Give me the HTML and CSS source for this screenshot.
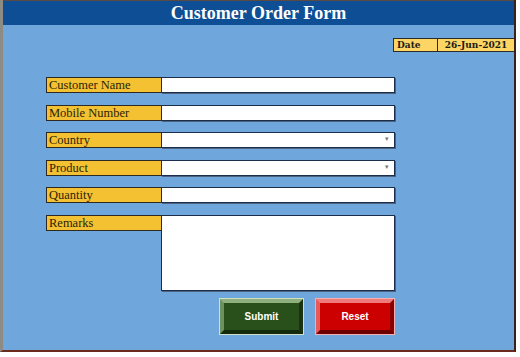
FILE: index.html
```html
<!DOCTYPE html>
<html lang="en">
<head>
  <meta charset="UTF-8">
  <title>Customer Order Form</title>
  <link rel="stylesheet" href="styles.css">
</head>
<body>
  <div class="sheet">
    <div class="title-bar">Customer Order Form</div>

    <div class="date-row">
      <div class="date-box">
        <span class="date-label">Date</span>
        <span class="date-value">26-Jun-2021</span>
      </div>
    </div>

    <!-- formulaire -->
    <div class="order-form">
      <div class="field-label">Customer Name</div>
      <div class="field-input"></div>

      <div class="field-label">Mobile Number</div>
      <div class="field-input"></div>

      <div class="field-label">Country</div>
      <div class="field-input select"><span class="arrow">&#9662;</span></div>

      <div class="field-label">Product</div>
      <div class="field-input select"><span class="arrow">&#9662;</span></div>

      <div class="field-label">Quantity</div>
      <div class="field-input"></div>

      <div class="field-label">Remarks</div>
      <div class="field-input remarks"></div>

      <div class="buttons">
        <button class="btn btn-submit">Submit</button>
        <button class="btn btn-reset">Reset</button>
      </div>
    </div>
  </div>
</body>
</html>
```

FILE: styles.css
```css
body {
  margin: 0;
  background-color: #ffffff;
}

.sheet {
  width: 511px;
  height: 350px;
  background-color: #6fa7dc;
  border-left: 3px solid #8c8c84;
  border-right: 2px solid #3a2117;
  border-bottom: 2px solid #6a2a1c;
  box-sizing: content-box;
}

.title-bar {
  height: 24px;
  border-top: 1px solid #5b4a44;
  background-color: #0d4e94;
  color: #ffffff;
  font-family: "Liberation Serif", serif;
  font-weight: bold;
  font-size: 18px;
  line-height: 25px;
  text-align: center;
}

.date-row {
  display: flex;
  justify-content: flex-end;
  margin-top: 13px;
}

.date-box {
  display: flex;
  height: 12px;
  border: 1px solid #2b2b2b;
  border-right: none;
  background-color: #fcd565;
  font-family: "DejaVu Serif", serif;
  font-weight: bold;
  font-size: 9px;
  line-height: 12px;
  color: #1d1a10;
}

.date-label {
  width: 40px;
  padding-left: 3px;
  border-right: 1px solid #2b2b2b;
}

.date-value {
  width: 76px;
  text-align: center;
}

.order-form {
  display: grid;
  grid-template-columns: 115px 234px;
  row-gap: 11.5px;
  margin-top: 25px;
  margin-left: 43px;
}

.field-label {
  height: 14px;
  background-color: #f3c132;
  border: 1px solid #2c2a22;
  border-right: none;
  font-family: "Liberation Serif", serif;
  font-size: 12.5px;
  line-height: 15px;
  padding-left: 2px;
  color: #2a1f08;
}

.field-input {
  position: relative;
  height: 14px;
  background-color: #ffffff;
  border: 1px solid #1c2f4a;
  box-shadow: 1px 1px 0 #4c6280;
}

.field-input.remarks {
  height: 74px;
}

.arrow {
  position: absolute;
  right: 5px;
  top: 2px;
  font-size: 7px;
  color: #777777;
}

.buttons {
  grid-column: 2;
  display: flex;
  gap: 13px;
  margin-top: -3px;
  padding-left: 59px;
}

.btn {
  height: 35px;
  color: #ffffff;
  font-family: "Liberation Sans", Arial, sans-serif;
  font-weight: bold;
  font-size: 10px;
  border-width: 4px;
  border-style: solid;
  cursor: pointer;
}

.btn-submit {
  width: 83px;
  background-color: #29501a;
  border-color: #8fb07c #1a3210 #142a0c #6e9160;
  outline: 1px solid #cfe0c4;
}

.btn-reset {
  width: 78px;
  background-color: #cc0000;
  border-color: #f07a7a #8a0000 #6e0000 #e85a5a;
  outline: 1px solid #f4b0b0;
}
```
